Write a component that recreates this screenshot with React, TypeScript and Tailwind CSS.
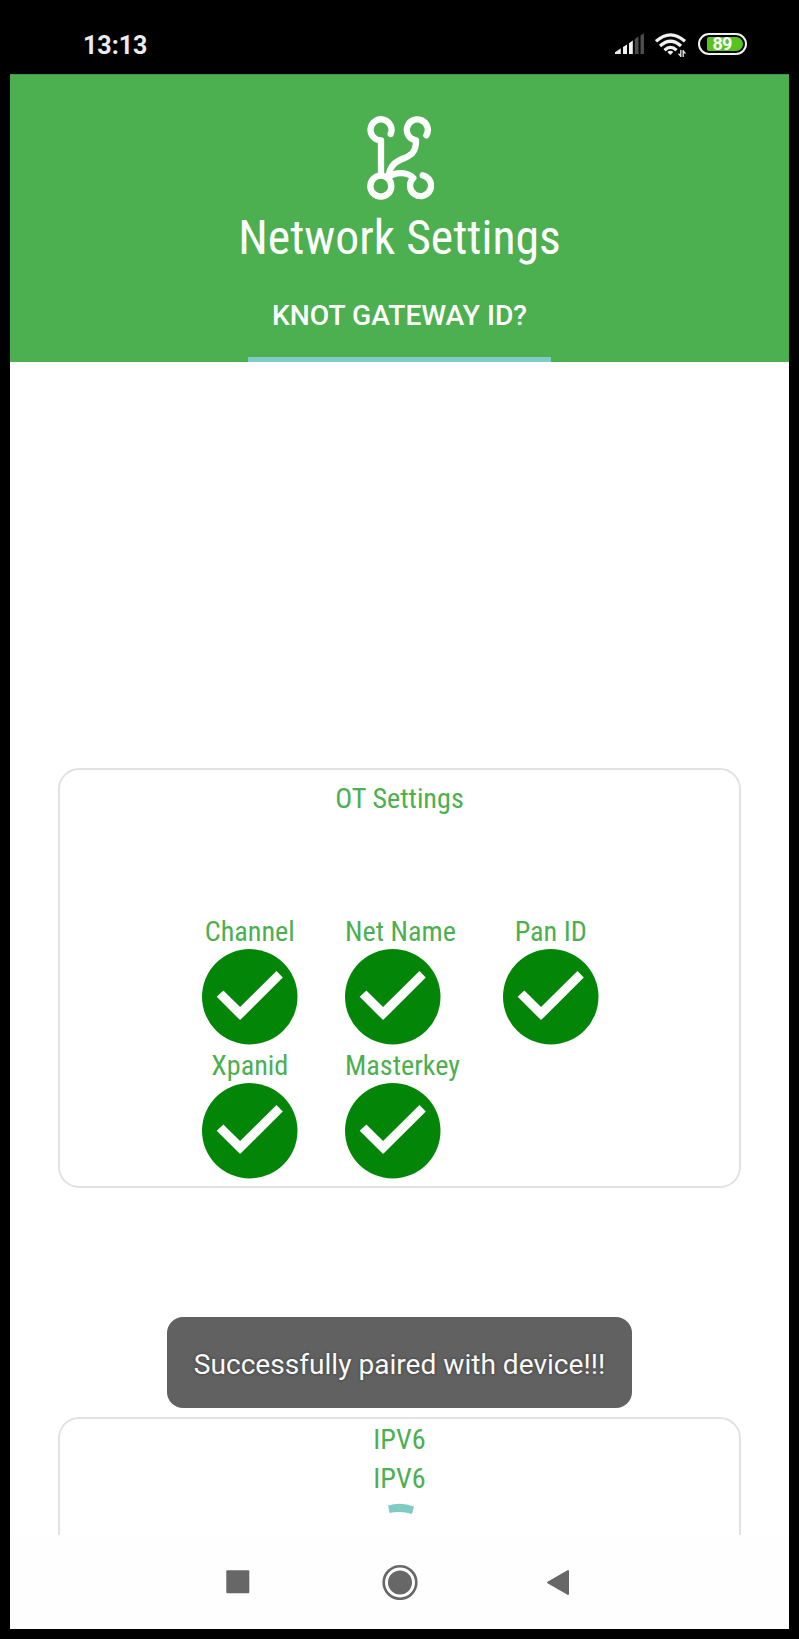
import type { ReactNode } from "react";

function Condensed({ children, className }: { children: ReactNode; className: string }) {
  return (
    <span
      className={`block whitespace-nowrap font-['Roboto_Condensed','Roboto',sans-serif] [font-stretch:75%] ${className}`}
    >
      {children}
    </span>
  );
}

function SignalIcon() {
  return (
    <svg className="h-[22px] w-[30px]" viewBox="0 0 30 22">
      <path d="M0 21V19.300L5.800 15.300V21Z" fill="#e8e8e8" />
      <path d="M8 21V14L12 11.500V21ZM14 21V10.200L17.800 7.500V21Z" fill="#f2f2f2" />
      <path d="M19.800 21V6L23.500 3.500V21ZM25.500 21V2.500L29 .2V21Z" fill="#4d4d4d" />
    </svg>
  );
}

function WifiIcon() {
  return (
    <svg className="h-[25px] w-[32px]" viewBox="0 0 32 25" fill="none">
      <g stroke="#f2f2f2" strokeWidth="3.200">
        <path d="M1 8.300Q15.500-4.700 30 8.300" />
        <path d="M5 13Q15.500 3.500 26 13" />
        <path d="M9.500 17.200Q15.500 11.700 21.500 17.200" />
      </g>
      <path d="M12.300 19Q15.300 16.300 18.300 19L15.300 22Z" fill="#f2f2f2" />
      <path d="M25.800 17V24M23.500 20.600L25.800 23.200M28.200 24V17M28.200 18L30.500 20.600" stroke="#e0e0e0" strokeWidth="1.400" />
    </svg>
  );
}

function Battery() {
  return (
    <div className="flex h-[22px] w-[49px] items-center rounded-full border-2 border-[#f0f0f0] pr-[2px] pl-[7px]">
      <div className="flex h-[14px] w-full items-center justify-center rounded-l-[2px] rounded-r-[7px] bg-[#55c41c] pr-[6px]">
        <span className="font-['Roboto'] text-[18px] leading-none font-bold tracking-[-0.8px] text-white [font-stretch:88%]">
          89
        </span>
      </div>
    </div>
  );
}

function KnotLogo() {
  return (
    <svg
      className="ml-[2px] h-[84px] w-[67px]"
      viewBox="52 49 201 252"
      preserveAspectRatio="none"
      fill="none"
      stroke="#fff"
      strokeWidth="19"
      strokeLinecap="round"
      strokeLinejoin="round"
    >
      <path d="M123 103A31.500 31.500 0 1 0 94 122V228" />
      <path d="M230 107A31.500 31.500 0 1 0 199 122C201 198 123 154 116 235" />
      <circle cx="93.500" cy="259.500" r="31.500" />
      <path d="M116 235C134 214 176 217 191 235A31.500 31.500 0 1 0 219 227" />
    </svg>
  );
}

function CheckIcon() {
  return (
    <svg className="block h-[95.500px] w-[95.500px] overflow-visible" viewBox="0 0 286 286">
      <circle cx="143" cy="143" r="143" fill="#038608" />
      <path d="M44 143L64 124L114 174L223 66L242 85L114 213Z" fill="#fff" />
    </svg>
  );
}

function Setting({ label, left = false }: { label: string; left?: boolean }) {
  return (
    <div className={left ? "flex flex-col items-start" : "flex flex-col items-center"}>
      <Condensed className="h-[38px] text-[28.200px] leading-[42px] text-[#4caf50]">{label}</Condensed>
      <CheckIcon />
    </div>
  );
}

export default function App() {
  return (
    <div className="flex h-[1639px] w-[799px] flex-col bg-black px-[10px] pb-[10px] font-['Roboto',sans-serif]">
      <div className="flex h-[74px] shrink-0 items-start justify-between pr-[42px] pl-[73px]">
        <span className="mt-[31px] text-[25px] leading-[30px] font-bold text-[#ebebeb]">13:13</span>
        <div className="mt-[33px] flex items-start">
          <SignalIcon />
          <div className="ml-[10px]">
            <WifiIcon />
          </div>
          <div className="ml-[11px]">
            <Battery />
          </div>
        </div>
      </div>

      <header className="flex h-[288px] shrink-0 flex-col items-center bg-[#4caf50] pt-[42px] text-white shadow-[inset_0_1px_0_#429546]">
        <KnotLogo />
        <Condensed className="mt-[7px] h-[62px] text-[47.700px] leading-[62px]">Network Settings</Condensed>
        <div className="mt-auto flex h-[88px] w-[303px] flex-col items-center border-b-[5px] border-[#80cbc4]">
          <span className="mt-[25px] text-[28.200px] leading-[34px] font-medium whitespace-nowrap">KNOT GATEWAY ID?</span>
        </div>
      </header>

      <div className="flex h-[1173px] shrink-0 flex-col overflow-hidden bg-white px-[48px]">
        <section className="mt-[406px] flex h-[420px] shrink-0 flex-col items-center rounded-[21px] border-2 border-[#e2e2e2] pt-[9px]">
          <Condensed className="h-[38px] text-[28.200px] leading-[40px] text-[#4caf50]">OT Settings</Condensed>
          <div className="mt-[94px] ml-[1.500px] grid grid-cols-[95.500px_110.500px_95.500px] gap-x-[47.500px]">
            <Setting label="Channel" />
            <Setting label="Net Name" left />
            <Setting label="Pan ID" />
            <Setting label="Xpanid" />
            <Setting label="Masterkey" left />
          </div>
        </section>

        <div className="mt-[129px] flex h-[91px] w-[465px] shrink-0 items-center justify-center self-center rounded-[16px] bg-[#616161]">
          <span className="mt-[5px] text-[28.100px] whitespace-nowrap text-[#fafafa] [text-shadow:0_0_3px_#333]">
            Successfully paired with device!!!
          </span>
        </div>

        <section className="mt-[9px] flex h-[180px] shrink-0 flex-col items-center rounded-[21px] border-2 border-[#e2e2e2] pt-[2px]">
          <Condensed className="h-[38px] text-[28.200px] leading-[38px] text-[#4caf50]">IPV6</Condensed>
          <Condensed className="h-[38px] text-[28.200px] leading-[40px] text-[#4caf50]">IPV6</Condensed>
          <svg className="mt-[6px] ml-[3px] h-[12px] w-[28px]" viewBox="0 0 28 12">
            <path d="M1 2.500Q14-1.500 27 3.500L25 11Q14 7.500 2.500 10Z" fill="#80cbc4" />
          </svg>
        </section>
      </div>

      <nav className="flex h-[94px] shrink-0 items-center justify-between bg-[#fefefe] pr-[219px] pl-[216px]">
        <svg className="h-6 w-6" viewBox="0 0 24 24">
          <rect x=".3" y=".3" width="23" height="23" rx="1" fill="#676767" />
        </svg>
        <svg className="ml-[3px] h-9 w-9" viewBox="0 0 36 36">
          <circle cx="18" cy="18.500" r="16.300" fill="none" stroke="#676767" strokeWidth="2.600" />
          <circle cx="18" cy="18.500" r="12" fill="#676767" />
        </svg>
        <svg className="h-7 w-6" viewBox="0 0 24 28">
          <path d="M2 14.500L22 3V26Z" fill="#676767" stroke="#676767" strokeWidth="2" strokeLinejoin="round" />
        </svg>
      </nav>
    </div>
  );
}
